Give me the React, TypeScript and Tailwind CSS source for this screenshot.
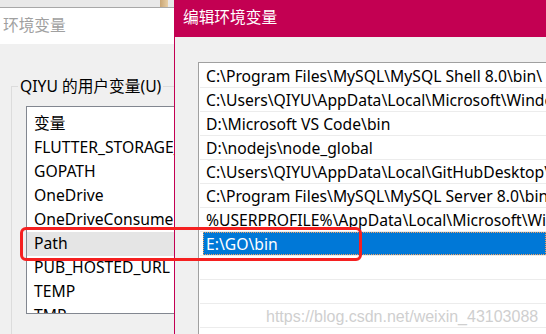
import React from "react";

const font = { fontFamily: '"Noto Sans", "Noto Sans CJK SC", sans-serif' };

const leftRows = [
  "FLUTTER_STORAGE_BASE_URL",
  "GOPATH",
  "OneDrive",
  "OneDriveConsumer",
  "Path",
  "PUB_HOSTED_URL",
  "TEMP",
  "TMP",
];

const rightRows = [
  "C:\\Program Files\\MySQL\\MySQL Shell 8.0\\bin\\",
  "C:\\Users\\QIYU\\AppData\\Local\\Microsoft\\WindowsApps",
  "D:\\Microsoft VS Code\\bin",
  "D:\\nodejs\\node_global",
  "C:\\Users\\QIYU\\AppData\\Local\\GitHubDesktop\\bin",
  "C:\\Program Files\\MySQL\\MySQL Server 8.0\\bin",
  "%USERPROFILE%\\AppData\\Local\\Microsoft\\WindowsApps",
  "E:\\GO\\bin",
  "",
  "",
  "",
];

export default function App() {
  return (
    <div
      className="relative w-[546px] h-[334px] overflow-hidden bg-[#f0f0f0] flex text-[15.7px] text-black"
      style={font}
    >
      {/* Left window */}
      <div className="w-[174px] shrink-0 flex flex-col">
        <div className="h-[8px] shrink-0 bg-[#e9e9e9] border-b border-[#a8a8a8] flex">
          <div className="w-[160px]" />
          <div className="w-[8px] bg-gradient-to-r from-[#c9a574] to-[#e8cfa6]" />
        </div>
        <div className="h-[36px] shrink-0 bg-white flex items-center pl-[3px] text-[#a0a0a0] whitespace-nowrap">
          环境变量
        </div>
        <div className="flex-1 pl-[11px] pt-[32px] overflow-hidden">
          <fieldset className="border-l border-t border-[#dcdcdc] h-[300px] min-w-0">
            <legend className="ml-[6px] px-[2px] leading-[20px] whitespace-nowrap">
              QIYU 的用户变量(U)
            </legend>
            <div className="ml-[14px] mt-[10px] w-[200px] h-[208px] bg-white border border-[#828790] border-r-0 pt-[5px] overflow-hidden">
              <div className="h-[24px] flex items-center pl-[7px] whitespace-nowrap">变量</div>
              {leftRows.map((r) => (
                <div
                  key={r}
                  className={
                    "h-[24px] flex items-center pl-[7px] whitespace-nowrap " +
                    (r === "Path" ? "bg-[#e5e5e5]" : "")
                  }
                >
                  {r}
                </div>
              ))}
            </div>
          </fieldset>
        </div>
      </div>

      {/* Right window */}
      <div className="flex-1 flex flex-col border-l border-[#c30052] min-w-0">
        <div className="h-[37px] shrink-0 bg-[#c30052] text-white flex items-center pl-[8px] pb-[2px] whitespace-nowrap">
          编辑环境变量
        </div>
        <div className="flex-1 pl-[23px] pt-[25px] overflow-hidden">
          <div className="bg-white border-l border-t border-[#a0a0a0] h-[300px] overflow-hidden pt-[1px]">
            {rightRows.map((r, i) => (
              <div
                key={i}
                className="h-[24px] ml-[1px] border-b border-[#ececec] flex whitespace-nowrap"
              >
                {r === "E:\\GO\\bin" ? (
                  <div className="ml-[3px] flex-1 bg-[#0078d7] text-white flex items-center pl-[3px] pt-[2px] outline outline-1 outline-dotted outline-[#f0a060] -outline-offset-1">
                    {r}
                  </div>
                ) : (
                  <div className="flex items-center pl-[6px] pt-[2px]">{r}</div>
                )}
              </div>
            ))}
          </div>
        </div>
      </div>

      {/* Red annotation */}
      <div className="absolute left-[20px] top-[227px] w-[342px] h-[34px] border-[3px] border-[#f52020] rounded-[6px]" />

      {/* Watermark */}
      <div
        className="absolute left-[266px] top-[305px] text-[16px] text-[#cfcfcf] whitespace-nowrap"
        style={{ fontFamily: '"Liberation Sans", Arial, sans-serif' }}
      >
        https://blog.csdn.net/weixin_43103088
      </div>
    </div>
  );
}
